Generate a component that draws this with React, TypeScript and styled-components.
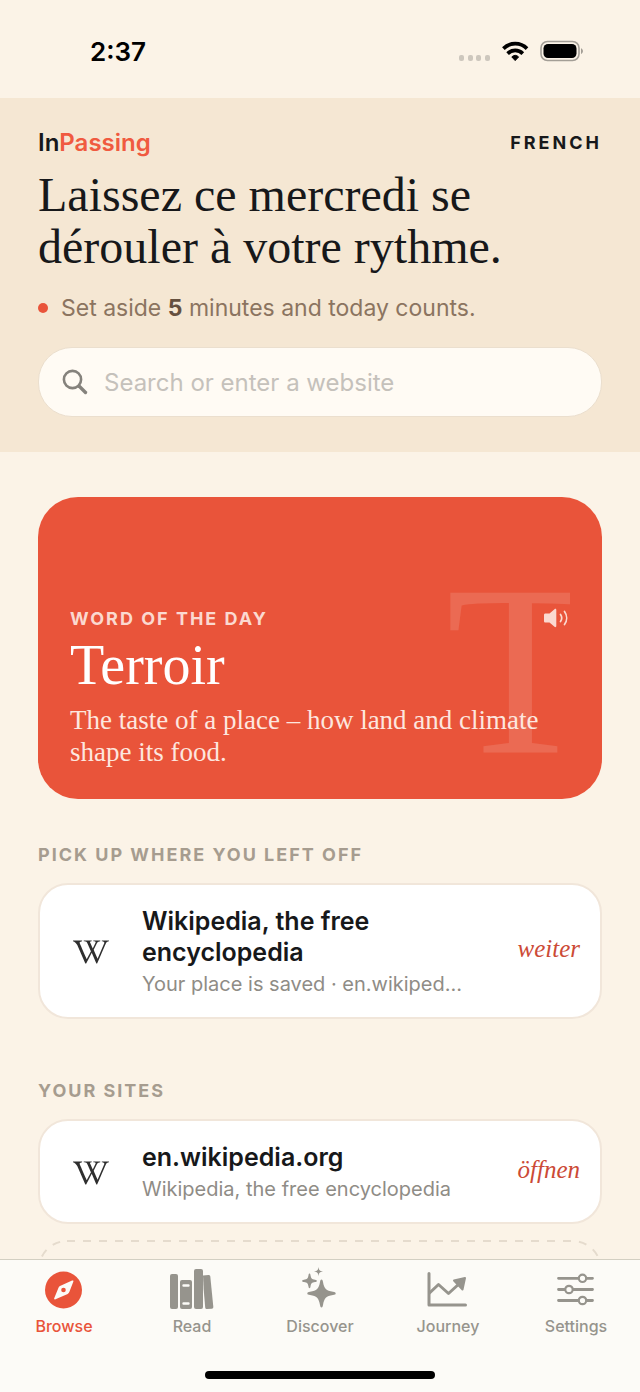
import React from "react";
import styled, { createGlobalStyle } from "styled-components";
import { FaWikipediaW } from "react-icons/fa";

const sans = `Inter, "Liberation Sans", sans-serif`;
const serif = `"Liberation Serif", serif`;

const GlobalStyle = createGlobalStyle`
  * {
    box-sizing: border-box;
  }
  body {
    margin: 0;
    background: #fbf3e7;
    font-family: ${sans};
    color: #17181a;
  }
  h1, h2, h3, p {
    margin: 0;
    font-weight: 400;
  }
  button {
    font: inherit;
    border: 0;
    padding: 0;
    background: none;
    cursor: pointer;
  }
  a {
    color: inherit;
    text-decoration: none;
  }
`;

interface Site {
  id: string;
  title: string;
  detail: string;
  action: string;
}

const recent: Site[] = [
  {
    id: "recent-wikipedia",
    title: "Wikipedia, the free encyclopedia",
    detail: "Your place is saved · en.wikipedia.org",
    action: "weiter",
  },
];

const sites: Site[] = [
  {
    id: "site-wikipedia",
    title: "en.wikipedia.org",
    detail: "Wikipedia, the free encyclopedia",
    action: "öffnen",
  },
];

const tabs = [
  { label: "Browse", icon: <BrowseIcon /> },
  { label: "Read", icon: <ReadIcon /> },
  { label: "Discover", icon: <DiscoverIcon /> },
  { label: "Journey", icon: <JourneyIcon /> },
  { label: "Settings", icon: <SettingsIcon /> },
];

export default function App() {
  const [active, setActive] = React.useState("Browse");

  return (
    <Screen>
      <GlobalStyle />
      <StatusBar>
        <Clock>2:37</Clock>
        <StatusIcons />
      </StatusBar>
      <Content>
        <Hero>
          <BrandRow>
            <Brand>
              In<span>Passing</span>
            </Brand>
            <Language type="button">FRENCH</Language>
          </BrandRow>
          <Headline>Laissez ce mercredi se dérouler à votre rythme.</Headline>
          <Goal>
            <span>
              Set aside <b>5</b> minutes and today counts.
            </span>
          </Goal>
          <SearchBox>
            <SearchIcon />
            <input
              type="text"
              aria-label="Search or enter a website"
              placeholder="Search or enter a website"
            />
          </SearchBox>
        </Hero>
        <Feed>
          <WordCard>
            <Watermark aria-hidden="true">T</Watermark>
            <WordTop>
              <Eyebrow>WORD OF THE DAY</Eyebrow>
              <button type="button" aria-label="Play pronunciation">
                <SpeakerIcon />
              </button>
            </WordTop>
            <Word>Terroir</Word>
            <Meaning>
              The taste of a place – how land and climate shape its food.
            </Meaning>
          </WordCard>
          <Section>
            <SectionTitle>PICK UP WHERE YOU LEFT OFF</SectionTitle>
            {recent.map((site) => (
              <SiteCard key={site.id} {...site} />
            ))}
          </Section>
          <Section>
            <SectionTitle>YOUR SITES</SectionTitle>
            {sites.map((site) => (
              <SiteCard key={site.id} {...site} />
            ))}
            <AddSite type="button" aria-label="Add a site">
              <svg width="100%" height="100%">
                <rect x="1" y="1" width="99.6%" height="98%" rx="28" />
              </svg>
            </AddSite>
          </Section>
        </Feed>
      </Content>
      <TabBar>
        <Tabs>
          {tabs.map((tab) => (
            <Tab
              key={tab.label}
              type="button"
              $active={tab.label === active}
              onClick={() => setActive(tab.label)}
            >
              {tab.icon}
              {tab.label}
            </Tab>
          ))}
        </Tabs>
        <HomeIndicator />
      </TabBar>
    </Screen>
  );
}

const SiteCard: React.FC<Site> = ({ title, detail, action }) => {
  return (
    <Card href="#">
      <FaWikipediaW className="logo" />
      <CardText>
        <h3>{title}</h3>
        <p>{detail}</p>
      </CardText>
      <em>{action}</em>
    </Card>
  );
};

function StatusIcons() {
  return (
    <svg width="128" height="24" viewBox="0 0 128 24">
      <g fill="#cdc7bd">
        <rect x="3" y="16" width="5" height="6" rx="2" />
        <rect x="12" y="16" width="5" height="6" rx="2" />
        <rect x="20" y="16" width="5" height="6" rx="2" />
        <rect x="29" y="16" width="5" height="6" rx="2" />
      </g>
      <g fill="none" stroke="#000" strokeWidth="3.7">
        <path d="M47.400 9.600a16.500 16.500 0 0 1 23.600 0" />
        <path d="M51.600 14.600a10.800 10.800 0 0 1 15.200 0" />
      </g>
      <path
        d="M59.200 21.600l-3.400-3.700a5 5 0 0 1 6.800 0z"
        stroke="#000"
        strokeLinejoin="round"
      />
      <rect
        x="85"
        y="2.5"
        width="38"
        height="19"
        rx="6.5"
        fill="none"
        stroke="#a39e96"
        strokeWidth="1.6"
      />
      <rect x="87.5" y="5" width="33" height="14" rx="4.5" />
      <path d="M125 9.200c2.600 1 2.600 4.800 0 5.800z" fill="#a39e96" />
    </svg>
  );
}

function SearchIcon() {
  return (
    <svg width="26" height="26" viewBox="0 0 26 26" fill="none" stroke="#85827c">
      <circle cx="10.500" cy="10.500" r="8.600" strokeWidth="2.600" />
      <path d="M17 17l6.500 6.500" strokeWidth="3.400" strokeLinecap="round" />
    </svg>
  );
}

function SpeakerIcon() {
  return (
    <svg width="26" height="24" viewBox="0 0 26 24">
      <path
        d="M1.500 7.500h4l5-4.300c.9-.7 1.800-.3 1.800.8v16c0 1.100-.9 1.500-1.800.8l-5-4.300h-4C.5 16.500 0 16 0 15V9c0-1 .5-1.500 1.500-1.500z"
        fill="currentColor"
      />
      <g fill="none" stroke="currentColor" strokeWidth="1.700" strokeLinecap="round">
        <path d="M16.500 8.500a6 6 0 0 1 0 7" />
        <path d="M20.500 5.500a11 11 0 0 1 0 13" />
      </g>
    </svg>
  );
}

function BrowseIcon() {
  return (
    <svg width="48" height="44" viewBox="0 0 48 44">
      <circle cx="23.500" cy="22" r="18.500" fill="currentColor" />
      <path
        d="M32.100 12.600c1-.4 1.600.2 1.200 1.200L29.300 24c-.3.800-.8 1.500-1.600 2L15.500 31.300c-1 .5-1.700-.2-1.200-1.200L18.400 20c.3-.9.800-1.400 1.600-1.900z"
        fill="#fcfbf7"
      />
      <circle cx="23.500" cy="22" r="2.300" fill="currentColor" />
    </svg>
  );
}

function ReadIcon() {
  return (
    <svg width="48" height="44" viewBox="0 0 48 44" fill="currentColor">
      <rect x="2" y="6" width="8" height="35" rx="2" />
      <rect x="12" y="12" width="12" height="29" rx="2" />
      <rect x="26" y="1" width="9" height="40" rx="2" />
      <path d="M35 7.500l5.500-.6c1 0 1.600.5 1.800 1.500l3 30.300c.1 1.200-.5 1.900-1.600 2l-4.500.3c-1.200 0-1.900-.5-2-1.600L35.700 22z" />
      <path
        d="M15.500 17.500h5M15.500 35.500h5"
        stroke="#fcfbf7"
        strokeWidth="2.400"
        strokeLinecap="round"
      />
    </svg>
  );
}

function DiscoverIcon() {
  return (
    <svg width="48" height="44" viewBox="0 0 48 44" fill="currentColor">
      <path d="M25.500 11.500c1 0 1.200 1 1.500 2.500 1.300 7 3 8.600 10 9.800 1.600.3 2.700.6 2.700 1.600s-1.100 1.300-2.700 1.600c-7 1.200-8.700 3-10 10-.3 1.600-.5 2.500-1.500 2.500s-1.200-.9-1.500-2.500c-1.300-7-3-8.800-10-10-1.600-.3-2.700-.6-2.700-1.600s1.100-1.300 2.700-1.600c7-1.200 8.700-2.800 10-9.800.3-1.500.5-2.500 1.500-2.500z" />
      <path d="M13.500 5.500c.7 0 .8.700 1 1.700.6 3.300 1.200 4 4.600 4.600 1 .2 1.700.4 1.700 1.100s-.7.900-1.700 1.100c-3.400.6-4 1.300-4.600 4.600-.2 1-.3 1.700-1 1.700s-.8-.7-1-1.700c-.6-3.300-1.200-4-4.600-4.600-1-.2-1.700-.4-1.700-1.100s.7-.9 1.700-1.100c3.400-.6 4-1.300 4.600-4.600.2-1 .3-1.700 1-1.700z" />
      <path d="M22.500-1c.4 3.300 1.200 4 4.500 4.500-3.300.6-4.100 1.300-4.500 4.700-.4-3.400-1.200-4.100-4.500-4.700 3.300-.5 4.100-1.200 4.500-4.500z" />
    </svg>
  );
}

function JourneyIcon() {
  return (
    <svg
      width="48"
      height="44"
      viewBox="0 0 48 44"
      fill="none"
      stroke="currentColor"
      strokeWidth="3"
      strokeLinecap="round"
      strokeLinejoin="round"
    >
      <path d="M5 5.500v31.500H41.500" />
      <path d="M5.500 25l9-8.500 10 9L36 15" />
      <path d="M30 12.500L41 10 38.500 21.500z" fill="currentColor" strokeWidth="2" />
    </svg>
  );
}

function SettingsIcon() {
  return (
    <svg
      width="48"
      height="44"
      viewBox="0 0 48 44"
      fill="#fcfbf7"
      stroke="currentColor"
      strokeWidth="2.800"
      strokeLinecap="round"
    >
      <path d="M6.500 10.300h34M6.500 21.500h34M6.500 32.500h34" />
      <g strokeWidth="2.200">
        <circle cx="30.500" cy="10.300" r="3.700" />
        <circle cx="17" cy="21.500" r="3.700" />
        <circle cx="30.500" cy="32.500" r="3.700" />
      </g>
    </svg>
  );
}

const Screen = styled.div`
  display: flex;
  flex-direction: column;
  height: 100vh;
`;

const StatusBar = styled.div`
  display: flex;
  flex-shrink: 0;
  align-items: center;
  justify-content: space-between;
  height: 98px;
  padding: 4px 56px 0 90px;
`;

const Clock = styled.span`
  font-size: 26px;
  font-weight: 600;
  color: #000;
`;

const Content = styled.main`
  flex: 1;
  min-height: 0;
  overflow-y: auto;
  scrollbar-width: none;
`;

const Hero = styled.header`
  padding: 28px 38px 35px;
  background: #f5e7d3;
`;

const BrandRow = styled.div`
  display: flex;
  align-items: center;
  justify-content: space-between;
  height: 32px;
`;

const Brand = styled.div`
  font-size: 24px;
  font-weight: 600;
  span {
    color: #f05a40;
  }
`;

const Language = styled.button`
  font-size: 18px;
  font-weight: 700;
  letter-spacing: 3px;
  color: #17181a;
`;

const Headline = styled.h1`
  max-width: 500px;
  margin-top: 11px;
  font-family: ${serif};
  font-size: 48px;
  line-height: 52px;
`;

const Goal = styled.p`
  display: flex;
  align-items: center;
  gap: 13px;
  margin-top: 20px;
  font-size: 23px;
  line-height: 30px;
  color: #8b7460;
  &::before {
    content: "";
    width: 10px;
    height: 10px;
    border-radius: 50%;
    background: #e9543a;
  }
  b {
    font-weight: 700;
    color: #65503f;
  }
`;

const SearchBox = styled.label`
  display: flex;
  align-items: center;
  gap: 16px;
  height: 70px;
  margin-top: 24px;
  padding: 0 23px;
  border: 1px solid #ebdfce;
  border-radius: 34px;
  background: #fffbf4;
  input {
    flex: 1;
    min-width: 0;
    padding: 0;
    border: 0;
    outline: 0;
    background: none;
    font-family: ${sans};
    font-size: 24px;
    color: #17181a;
  }
  input::placeholder {
    color: #c5c1bb;
  }
`;

const Feed = styled.div`
  padding: 45px 38px;
`;

const WordCard = styled.section`
  position: relative;
  display: flex;
  flex-direction: column;
  justify-content: flex-end;
  min-height: 302px;
  padding: 31px 32px;
  border-radius: 40px;
  background: #e9543a;
  color: #fff;
`;

/* oversized initial, cut off at the card's inner edge */
const Watermark = styled.span`
  position: absolute;
  right: 32px;
  bottom: 0;
  width: 124px;
  overflow: hidden;
  font-family: ${serif};
  font-size: 244px;
  line-height: 256px;
  color: rgba(255, 255, 255, 0.13);
`;

const WordTop = styled.div`
  display: flex;
  align-items: center;
  justify-content: space-between;
  position: relative;
  height: 24px;
  button {
    height: 24px;
    color: #fbd9d0;
  }
`;

const Eyebrow = styled.h2`
  font-size: 18px;
  font-weight: 700;
  letter-spacing: 2px;
  color: #fbd9d0;
`;

const Word = styled.p`
  margin-top: 5px;
  font-family: ${serif};
  font-size: 56px;
  line-height: 60px;
`;

const Meaning = styled.p`
  position: relative;
  margin-top: 9px;
  font-family: ${serif};
  font-size: 27px;
  line-height: 32px;
  color: #fde6df;
`;

const Section = styled.section`
  display: flex;
  flex-direction: column;
  gap: 16px;
  margin-top: 44px;
  & + & {
    margin-top: 60px;
  }
`;

const SectionTitle = styled.h2`
  font-size: 18px;
  font-weight: 700;
  line-height: 24px;
  letter-spacing: 2px;
  color: #a69c8f;
`;

const Card = styled.a`
  display: flex;
  align-items: center;
  padding: 21px 20px 19px 22px;
  border: 2px solid #f1e6da;
  border-radius: 30px;
  background: #fff;
  .logo {
    flex-shrink: 0;
    width: 36px;
    height: 36px;
    margin: 0 33px 0 11px;
    color: #2f2f2f;
  }
  em {
    padding-bottom: 6px;
    font-family: ${serif};
    font-size: 25px;
    color: #cc4a36;
  }
`;

const CardText = styled.div`
  flex: 1;
  min-width: 0;
  margin-right: 54px;
  h3 {
    font-size: 25px;
    font-weight: 600;
    line-height: 31px;
  }
  p {
    overflow: hidden;
    margin-top: 2px;
    font-size: 20px;
    line-height: 28px;
    color: #8f8c86;
    text-overflow: ellipsis;
    white-space: nowrap;
  }
`;

const AddSite = styled.button`
  display: block;
  height: 104px;
  svg {
    display: block;
  }
  rect {
    fill: none;
    stroke: #e5dbcd;
    stroke-width: 2;
    stroke-dasharray: 8 8;
  }
`;

const TabBar = styled.footer`
  flex-shrink: 0;
  padding-bottom: 13px;
  border-top: 1px solid #d3cfc2;
  background: #fcfbf7;
`;

const Tabs = styled.nav`
  display: grid;
  grid-template-columns: repeat(5, 1fr);
`;

const Tab = styled.button<{ $active: boolean }>`
  display: flex;
  flex-direction: column;
  align-items: center;
  gap: 4px;
  padding-top: 8px;
  font-size: 16px;
  font-weight: 500;
  line-height: 20px;
  color: ${({ $active }) => ($active ? "#e9543a" : "#96948d")};
  svg {
    overflow: visible;
  }
`;

const HomeIndicator = styled.div`
  width: 230px;
  height: 8px;
  margin: 35px auto 0;
  border-radius: 4px;
  background: #000;
`;
